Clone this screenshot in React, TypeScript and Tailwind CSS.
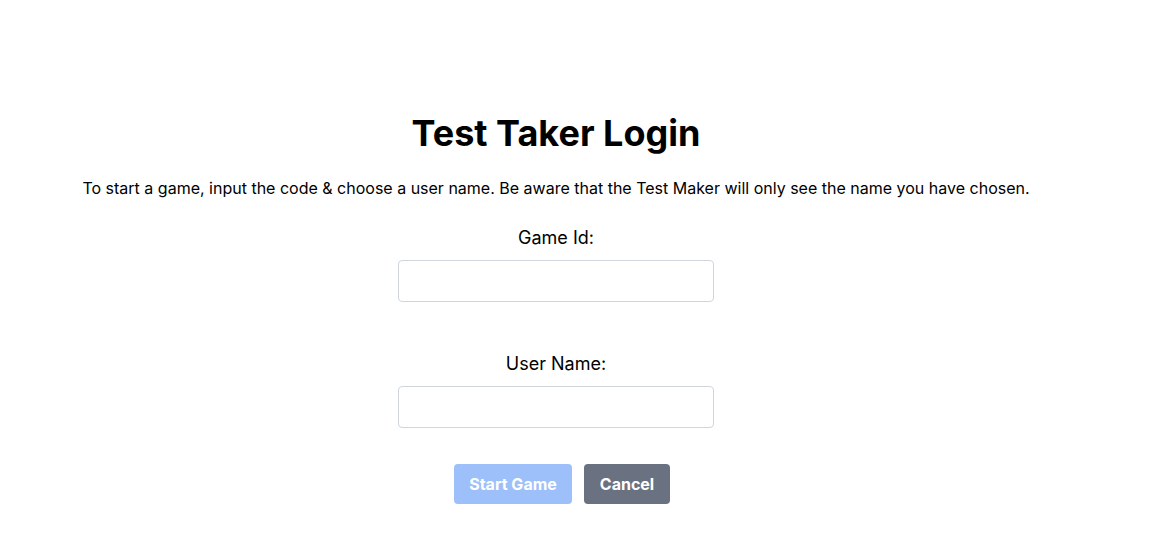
export default function App() {
  return (
    <div
      className="min-h-[544px] bg-white text-black"
      style={{ fontFamily: 'Inter, "Noto Sans", sans-serif' }}
    >
      <div className="w-[1112px] flex flex-col items-center pt-[113px]">
        <h1 className="text-4xl font-bold">Test Taker Login</h1>
        <p className="mt-[23px] text-base">
          To start a game, input the code &amp; choose a user name. Be aware that the Test Maker will only see the name you have chosen.
        </p>
        <label className="mt-[24px] text-lg">Game Id:</label>
        <input
          type="text"
          className="mt-2 w-[316px] h-[42px] rounded border border-gray-300 px-3 outline-none"
        />
        <label className="mt-[48px] text-lg">User Name:</label>
        <input
          type="text"
          className="mt-2 w-[316px] h-[42px] rounded border border-gray-300 px-3 outline-none"
        />
        <div className="mt-9 ml-3 flex gap-3">
          <button className="h-10 w-[118px] rounded bg-[#9dc0fa] text-white font-bold">Start Game</button>
          <button className="h-10 w-[86px] rounded bg-gray-500 text-white font-bold">Cancel</button>
        </div>
      </div>
    </div>
  );
}
